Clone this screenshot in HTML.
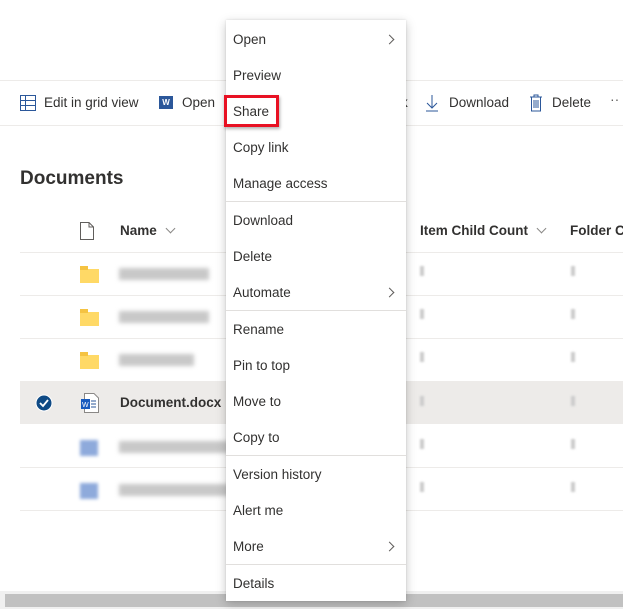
<!DOCTYPE html>
<html><head><style>
*{margin:0;padding:0;box-sizing:border-box}
body{width:623px;height:609px;background:#fff;font-family:"Liberation Sans",sans-serif;color:#323130;position:relative;overflow:hidden;font-size:14px}
.a{position:absolute}
.line{position:absolute;height:1px;background:#edebe9}
.menu{position:absolute;left:226px;top:20px;width:180px;height:581px;background:#fff;box-shadow:0 3px 10px rgba(0,0,0,.22),0 0 2px rgba(0,0,0,.12)}
.mi{position:absolute;left:7px;font-size:13.5px;color:#323130}
.sep{position:absolute;left:0;width:180px;height:1px;background:#e1dfdd}
.chev{position:absolute;left:160px;width:7px;height:7px;border-top:1px solid #605e5c;border-right:1px solid #605e5c;transform:rotate(45deg)}
.blur{position:absolute;height:12px;background:#c8c8c8;filter:blur(2px)}
.fold{position:absolute;left:80px;width:19px;height:14px;background:#ffd966}
.fold:before{content:"";position:absolute;left:0;top:-3px;width:8px;height:4px;background:#f5c342}
.tick{position:absolute;width:4px;height:10px;background:#ccc;filter:blur(1px)}
</style></head><body>
<div class="line" style="left:0;top:80px;width:623px"></div>
<div class="line" style="left:0;top:125px;width:623px"></div>
<!-- toolbar -->
<svg class="a" style="left:20px;top:95px" width="16" height="16"><rect x="0.5" y="0.5" width="15" height="15" fill="none" stroke="#2b579a"/><path d="M0 5.5H16M0 10.5H16M5.5 0V16" stroke="#2b579a"/></svg>
<div class="a" style="left:44px;top:95px;font-size:13.5px">Edit in grid view</div>
<div class="a" style="left:159px;top:96px;width:14px;height:13px;background:#2b579a;color:#fff;font-size:8px;font-weight:bold;text-align:center;line-height:13px">W</div>
<div class="a" style="left:182px;top:95px;font-size:13.5px">Open</div>
<div class="a" style="left:401px;top:95px;font-size:13.5px">k</div>
<svg class="a" style="left:425px;top:94px" width="14" height="18"><path d="M7 1V14M2 9L7 14L12 9M1 17H13" stroke="#2b579a" fill="none"/></svg>
<div class="a" style="left:449px;top:95px;font-size:13.5px">Download</div>
<svg class="a" style="left:529px;top:94px" width="14" height="18"><path d="M1 3H13M5 3V1H9V3M2.5 3V17H11.5V3M5 6V14M7 6V14M9 6V14" stroke="#2b579a" fill="none"/></svg>
<div class="a" style="left:552px;top:95px;font-size:13.5px">Delete</div>
<div class="a" style="left:610px;top:91px;font-size:14px;color:#605e5c">··</div>
<div class="a" style="left:20px;top:168px;font-size:19px;font-weight:600">Documents</div>
<!-- header -->
<svg class="a" style="left:80px;top:222px" width="14" height="18"><path d="M0.5 0.5H9L13.5 5V17.5H0.5Z M9 0.5V5H13.5" fill="none" stroke="#605e5c"/></svg>
<div class="a" style="left:120px;top:223px;font-weight:600;font-size:13.5px">Name</div>
<div class="chev" style="left:167px;top:225px;transform:rotate(135deg);border-color:#8a8886"></div>
<div class="a" style="left:420px;top:223px;font-weight:600;font-size:13.5px">Item Child Count</div>
<div class="chev" style="left:538px;top:225px;transform:rotate(135deg);border-color:#8a8886"></div>
<div class="a" style="left:570px;top:223px;font-weight:600;font-size:13.5px;white-space:nowrap">Folder C</div>
<div class="line" style="left:20px;top:252px;width:603px"></div>
<div class="line" style="left:20px;top:295px;width:603px"></div>
<div class="line" style="left:20px;top:338px;width:603px"></div>
<div class="a" style="left:20px;top:381px;width:603px;height:43px;background:#edebe9"></div>
<div class="line" style="left:20px;top:467px;width:603px"></div>
<div class="line" style="left:20px;top:510px;width:603px"></div>
<div class="fold" style="top:269px"></div><div class="blur" style="left:119px;top:268px;width:90px"></div>
<div class="fold" style="top:312px"></div><div class="blur" style="left:119px;top:311px;width:90px"></div>
<div class="fold" style="top:355px"></div><div class="blur" style="left:119px;top:354px;width:75px"></div>
<svg class="a" style="left:35px;top:394px" width="18" height="18"><circle cx="9" cy="9" r="8" fill="#0f4a85" stroke="#fff"/><path d="M5 9L8 12L13 6" stroke="#fff" stroke-width="1.8" fill="none"/></svg>
<svg class="a" style="left:80px;top:393px" width="20" height="20"><path d="M4.5 0.5H14L18.5 5V19.5H4.5Z" fill="#fff" stroke="#8a8886"/><path d="M11 8H16M11 11H16M11 14H16" stroke="#2b579a"/><rect x="1" y="6" width="9" height="10" fill="#185abd"/><text x="2" y="14" font-size="7" fill="#fff" font-family="Liberation Sans">W</text></svg>
<div class="a" style="left:120px;top:395px;font-weight:600;font-size:13.5px">Document.docx</div>
<div class="a" style="left:80px;top:440px;width:18px;height:16px;background:#8eaadb;filter:blur(1.5px)"></div><div class="blur" style="left:119px;top:441px;width:110px"></div>
<div class="a" style="left:80px;top:483px;width:18px;height:16px;background:#8eaadb;filter:blur(1.5px)"></div><div class="blur" style="left:119px;top:484px;width:110px"></div>
<div class="tick" style="left:420px;top:266px"></div><div class="tick" style="left:571px;top:266px"></div>
<div class="tick" style="left:420px;top:309px"></div><div class="tick" style="left:571px;top:309px"></div>
<div class="tick" style="left:420px;top:352px"></div><div class="tick" style="left:571px;top:352px"></div>
<div class="tick" style="left:420px;top:396px"></div><div class="tick" style="left:571px;top:396px"></div>
<div class="tick" style="left:420px;top:439px"></div><div class="tick" style="left:571px;top:439px"></div>
<div class="tick" style="left:420px;top:482px"></div><div class="tick" style="left:571px;top:482px"></div>
<!-- scrollbar -->
<div class="a" style="left:0;top:591px;width:623px;height:18px;background:#f0f0f0"></div>
<div class="a" style="left:5px;top:594px;width:618px;height:13px;background:#c1c1c1"></div>
<!-- menu -->
<div class="menu">
<div class="mi" style="top:12px">Open</div><div class="chev" style="top:16px"></div>
<div class="mi" style="top:48px">Preview</div>
<div class="mi" style="top:84px">Share</div>
<div class="mi" style="top:120px">Copy link</div>
<div class="mi" style="top:156px">Manage access</div>
<div class="sep" style="top:181px"></div>
<div class="mi" style="top:193px">Download</div>
<div class="mi" style="top:229px">Delete</div>
<div class="mi" style="top:265px">Automate</div><div class="chev" style="top:269px"></div>
<div class="sep" style="top:290px"></div>
<div class="mi" style="top:302px">Rename</div>
<div class="mi" style="top:338px">Pin to top</div>
<div class="mi" style="top:374px">Move to</div>
<div class="mi" style="top:410px">Copy to</div>
<div class="sep" style="top:435px"></div>
<div class="mi" style="top:447px">Version history</div>
<div class="mi" style="top:483px">Alert me</div>
<div class="mi" style="top:519px">More</div><div class="chev" style="top:523px"></div>
<div class="sep" style="top:544px"></div>
<div class="mi" style="top:556px">Details</div>
</div>
<div class="a" style="left:224px;top:95px;width:55px;height:32px;border:3px solid #e81123;box-shadow:1px 2px 3px rgba(0,0,0,.3)"></div>
</body></html>
